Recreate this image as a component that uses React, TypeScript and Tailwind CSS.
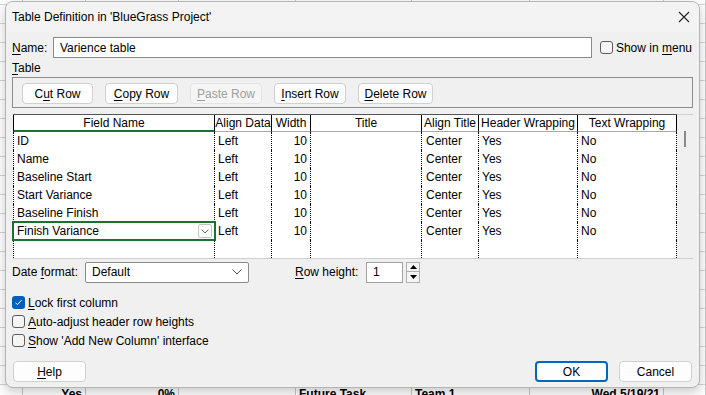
import React from "react";

const U = ({ children }: { children: React.ReactNode }) => <span className="underline underline-offset-2">{children}</span>;

const cols = [
  { w: "w-[202px] border-l", title: "Field Name" },
  { w: "w-[57px]", title: "Align Data" },
  { w: "w-[39px]", title: "Width" },
  { w: "w-[111px]", title: "Title" },
  { w: "w-[57px]", title: "Align Title" },
  { w: "w-[99px]", title: "Header Wrapping" },
  { w: "w-[99px]", title: "Text Wrapping" },
];

const fields = ["ID", "Name", "Baseline Start", "Start Variance", "Baseline Finish", "Finish Variance", ""];

const Btn = ({ children, w, disabled, primary }: { children: React.ReactNode; w: string; disabled?: boolean; primary?: boolean }) => (
  <div
    className={`${w} h-[21px] flex items-center justify-center rounded-[4px] border ${
      disabled
        ? "border-[#e3e3e3] bg-[#f5f5f5] text-[#a0a0a0]"
        : primary
        ? "border-[#0067c0] border-2 bg-[#fdfdfd] text-black"
        : "border-[#d0d0d0] bg-[#fdfdfd] text-black"
    }`}
  >
    {children}
  </div>
);

const Check = ({ checked }: { checked?: boolean }) =>
  checked ? (
    <div className="w-[13px] h-[13px] shrink-0 rounded-[3px] bg-[#005fb8] flex items-center justify-center">
      <svg width="9" height="9" viewBox="0 0 9 9">
        <path d="M1.5 4.8 L3.5 6.6 L7.5 2.2" stroke="#fff" strokeWidth="1" fill="none" />
      </svg>
    </div>
  ) : (
    <div className="w-[13px] h-[13px] shrink-0 rounded-[3px] border border-[#5c5c5c] bg-[#f5f5f5]" />
  );

// sheet columns peeking out around the dialog
const bgCols = ["w-[23px]", "w-[63px]", "w-[93px]", "w-[117px]", "w-[116px]", "w-[118px]", "w-[134px]", "w-[42px]"];
const bgText = ["", "Yes", "0%", "", "Future Task", "Team 1", "Wed 5/19/21", ""];

export default function App() {
  return (
    <div className="relative w-[706px] h-[395px] overflow-hidden bg-white font-['Liberation_Sans',sans-serif] text-[12px] text-black">
      {/* spreadsheet behind the dialog */}
      <div className="flex flex-col -mt-[14px]">
        {Array.from({ length: 22 }).map((_, i) => (
          <div key={i} className="flex h-[19px] border-b border-[#d4d4d4] font-bold">
            {bgCols.map((c, j) => (
              <div key={j} className={`${c} shrink-0 border-r border-[#c8c8c8] px-[3px] leading-[18px] ${j === 1 || j === 2 || j === 6 ? "text-right" : ""}`}>
                {i === 0 || i === 21 ? bgText[j] : ""}
              </div>
            ))}
          </div>
        ))}
      </div>

      {/* dialog */}
      <div className="absolute left-[5px] top-[1px] w-[695px] h-[387px] rounded-[8px] border border-[#b4b4b4] bg-[#f0f0f0] shadow-[0_4px_12px_rgba(0,0,0,0.22)] overflow-hidden">
        <div className="h-[30px] flex items-center justify-between pl-[6px] pr-[8px] bg-[#f3f3f3]">
          <span>Table Definition in 'BlueGrass Project'</span>
          <svg width="12" height="12" viewBox="0 0 12 12" className="mr-[1px]">
            <path d="M1 1 L11 11 M11 1 L1 11" stroke="#222" strokeWidth="1.1" />
          </svg>
        </div>

        <div className="pl-[6px] pr-[7px]">
          <div className="flex items-center h-[21px] mt-[5px]">
            <span className="w-[41px]"><U>N</U>ame:</span>
            <div className="w-[540px] h-[21px] border border-[#8a8a8a] bg-white flex items-center pl-[6px]">Varience table</div>
            <div className="ml-[8px] flex items-center gap-[3px] whitespace-nowrap">
              <Check />
              <span>Show in <U>m</U>enu</span>
            </div>
          </div>

          <div className="h-[14px] mt-[3px] leading-[14px]"><U>T</U>able</div>

          <div className="mt-[2px] w-[681px] h-[31px] border border-[#8c8c8c] flex gap-[12px] pl-[9px] pt-[5px]">
            <Btn w="w-[71px]">C<U>u</U>t Row</Btn>
            <Btn w="w-[73px]"><U>C</U>opy Row</Btn>
            <Btn w="w-[72px]" disabled><U>P</U>aste Row</Btn>
            <Btn w="w-[72px]"><U>I</U>nsert Row</Btn>
            <Btn w="w-[75px]"><U>D</U>elete Row</Btn>
          </div>

          {/* grid */}
          <div className="mt-[6px] ml-[1px] w-[680px] flex border-r border-b border-[#d0d0d0]">
            <div className="flex flex-col bg-white">
              <div className="flex h-[18px] border-t border-[#555]">
                {cols.map((c, i) => (
                  <div
                    key={i}
                    className={`${c.w} shrink-0 border-r border-black ${i === 0 ? "border-l-black border-b-2 border-b-[#1e6f32]" : "border-b border-b-[#a8a8a8]"} flex items-center justify-center whitespace-nowrap overflow-hidden`}
                  >
                    {c.title}
                  </div>
                ))}
              </div>
              {fields.map((f, r) => (
                <div key={r} className="flex h-[18px]">
                  {cols.map((c, i) => (
                    <div
                      key={i}
                      className={`${c.w} shrink-0 border-r border-dotted border-black flex items-center px-[3px] whitespace-nowrap ${i === 2 ? "justify-end" : ""} ${
                        i === 0 && r === 5 ? "relative z-10 outline-2 outline-solid outline-[#1e6f32] -outline-offset-1 justify-between pr-[2px]" : ""
                      }`}
                    >
                      {f === ""
                        ? ""
                        : i === 0
                        ? (
                          <>
                            <span>{f}</span>
                            {r === 5 && (
                              <div className="w-[14px] h-[14px] border border-[#c4c4c4] rounded-[2px] flex items-center justify-center">
                                <svg width="8" height="5" viewBox="0 0 8 5">
                                  <path d="M0.5 0.5 L4 4 L7.5 0.5" stroke="#666" fill="none" />
                                </svg>
                              </div>
                            )}
                          </>
                        )
                        : i === 1
                        ? "Left"
                        : i === 2
                        ? "10"
                        : i === 3
                        ? ""
                        : i === 4
                        ? <span className="pl-[1px]">Center</span>
                        : i === 5
                        ? "Yes"
                        : "No"}
                    </div>
                  ))}
                </div>
              ))}
            </div>
            <div className="w-[16px] shrink-0 bg-[#f0f0f0] border-t border-[#d0d0d0] pl-[7px] pt-[16px]">
              <div className="w-[2px] h-[16px] bg-[#8a8a8a]" />
            </div>
          </div>

          {/* date format / row height */}
          <div className="flex items-center h-[22px] mt-[2px]">
            <span className="w-[73px]">Date <U>f</U>ormat:</span>
            <div className="w-[164px] h-[21px] border border-[#8a8a8a] rounded-[2px] bg-white flex items-center justify-between pl-[6px] pr-[6px]">
              <span>Default</span>
              <svg width="10" height="6" viewBox="0 0 10 6">
                <path d="M0.5 0.5 L5 5 L9.5 0.5" stroke="#555" fill="none" />
              </svg>
            </div>
            <span className="ml-[46px] w-[71px]"><U>R</U>ow height:</span>
            <div className="w-[37px] h-[21px] border border-[#a0a0a0] bg-white flex items-center pl-[6px]">1</div>
            <div className="ml-[3px] w-[14px] h-[21px] flex flex-col">
              <div className="h-[10px] border border-[#b0b0b0] bg-[#f5f5f5] flex items-center justify-center">
                <svg width="7" height="4" viewBox="0 0 7 4"><path d="M0 4 L3.5 0 L7 4 Z" fill="#000" /></svg>
              </div>
              <div className="h-[11px] border border-t-0 border-[#b0b0b0] bg-[#f5f5f5] flex items-center justify-center">
                <svg width="7" height="4" viewBox="0 0 7 4"><path d="M0 0 L3.5 4 L7 0 Z" fill="#000" /></svg>
              </div>
            </div>
          </div>

          {/* checkboxes */}
          <div className="mt-[13px] flex flex-col gap-[6px]">
            <div className="flex items-center gap-[3px] h-[13px]">
              <Check checked />
              <span><U>L</U>ock first column</span>
            </div>
            <div className="flex items-center gap-[3px] h-[13px]">
              <Check />
              <span><U>A</U>uto-adjust header row heights</span>
            </div>
            <div className="flex items-center gap-[3px] h-[13px]">
              <Check />
              <span><U>S</U>how 'Add New Column' interface</span>
            </div>
          </div>

          {/* bottom buttons */}
          <div className="mt-[14px] flex items-center pl-[1px]">
            <Btn w="w-[73px]"><U>H</U>elp</Btn>
            <div className="flex-1" />
            <Btn w="w-[73px]" primary>OK</Btn>
            <div className="w-[11px]" />
            <Btn w="w-[73px]">Cancel</Btn>
          </div>
        </div>
      </div>
    </div>
  );
}
